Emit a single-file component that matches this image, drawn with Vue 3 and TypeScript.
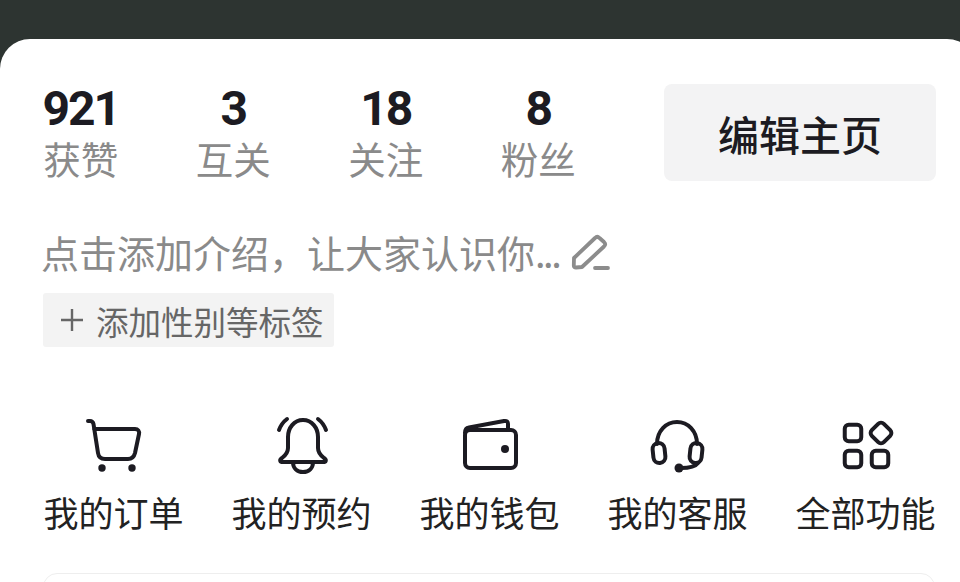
<script setup lang="ts">
const stats = [
  { value: "921", label: "获赞" },
  { value: "3", label: "互关" },
  { value: "18", label: "关注" },
  { value: "8", label: "粉丝" },
];
</script>

<template>
  <div class="page">
    <div class="sheet">
      <div class="top-row">
        <div class="stats">
          <div v-for="s in stats" :key="s.label" class="stat">
            <div class="stat-value">{{ s.value }}</div>
            <div class="stat-label">{{ s.label }}</div>
          </div>
        </div>
        <button class="edit-btn">编辑主页</button>
      </div>

      <div class="intro">
        <span>点击添加介绍，让大家认识你<span class="dots">...</span></span>
        <svg class="pencil" viewBox="0 0 40 40" fill="none" stroke="#8c8c8c" stroke-width="3.8" stroke-linecap="round" stroke-linejoin="round">
          <path d="M4 26 25 6c1.500-1.500 3-1.500 4.500 0l4.500 4c1.500 1.500 1.500 3 0 4.500L12 35l-6 .5c-1.500 0-2.200-.7-2.200-2z" />
          <path d="M25 36h13" />
        </svg>
      </div>

      <div class="tag">
        <svg class="plus" viewBox="0 0 24 24" fill="none" stroke="#666" stroke-width="2.400">
          <path d="M12 1v22M1 12h22" />
        </svg>
        <span>添加性别等标签</span>
      </div>

      <div class="actions">
        <div class="action">
          <svg viewBox="0 0 60 60" fill="none" stroke="#1c1b22" stroke-width="4" stroke-linecap="round" stroke-linejoin="round">
            <path d="M4 5h2c2 0 3 1 3.500 3L14 37c.6 4 3 6 7 6h23c4 0 6-2 7-6l4-19c.6-3-1-5-4-5H10" />
            <circle cx="18" cy="52" r="3.700" fill="#1c1b22" stroke="none" />
            <circle cx="48" cy="52" r="3.700" fill="#1c1b22" stroke="none" />
          </svg>
          <span>我的订单</span>
        </div>
        <div class="action">
          <svg viewBox="0 0 60 60" fill="none" stroke="#1c1b22" stroke-width="4" stroke-linecap="round" stroke-linejoin="round">
            <path d="M31 4c-9 0-15 8-15 17v11c0 4-2 7-6 10-3 2-2 4 1 4h40c3 0 4-2 1-4-4-3-6-6-6-10V21c0-9-6-17-15-17z" />
            <path d="M21 46c0 6 4 10 10 10s10-4 10-10" />
            <path d="M7 14c1.500-4 4-8 8-11M54 14c-1.500-4-4-8-8-11" />
          </svg>
          <span>我的预约</span>
        </div>
        <div class="action">
          <svg viewBox="0 0 60 60" fill="none" stroke="#1c1b22" stroke-width="4" stroke-linecap="round" stroke-linejoin="round">
            <rect x="5" y="14" width="51" height="38" rx="5" />
            <path d="M5 17c0-3 1-5 4-5.500L44 5c3-.5 4 1 4 3v6" />
            <circle cx="45" cy="33" r="4" fill="#1c1b22" stroke="none" />
          </svg>
          <span>我的钱包</span>
        </div>
        <div class="action">
          <svg viewBox="0 0 60 60" fill="none" stroke="#1c1b22" stroke-width="4" stroke-linecap="round" stroke-linejoin="round">
            <path d="M9 28C9 15 18 6 29 6s20 9 20 22" />
            <rect x="5" y="27" width="12" height="20" rx="6" transform="rotate(-6 11 37)" />
            <rect x="42" y="27" width="12" height="20" rx="6" transform="rotate(6 48 37)" />
            <path d="M33 52c8 0 14-1 17-5" />
            <circle cx="31" cy="52" r="4.500" fill="#1c1b22" stroke="none" />
          </svg>
          <span>我的客服</span>
        </div>
        <div class="action">
          <svg viewBox="0 0 60 60" fill="none" stroke="#1c1b22" stroke-width="4" stroke-linejoin="round">
            <rect x="8.750" y="8.750" width="16.500" height="16.500" rx="4" />
            <rect x="8.750" y="34.750" width="16.500" height="16.500" rx="4" />
            <rect x="35.750" y="34.750" width="16.500" height="16.500" rx="4" />
            <rect x="36.500" y="8.500" width="17" height="17" rx="4" transform="rotate(45 45 17)" />
          </svg>
          <span>全部功能</span>
        </div>
      </div>

      <div class="panel"></div>
    </div>
  </div>
</template>

<style scoped>
.page {
  height: 582px;
  overflow: hidden;
  padding-top: 39px;
  box-sizing: border-box;
  background: #2d3431;
  font-family: "Noto Sans CJK SC", "Noto Sans", sans-serif;
}

/* the sheet runs a little past the right edge, so that corner looks cut off */
.sheet {
  height: 100%;
  margin-right: -17px;
  background: #fff;
  border-radius: 30px 30px 0 0;
  overflow: hidden;
  padding-top: 45px;
  box-sizing: border-box;
}

.top-row {
  display: flex;
  align-items: flex-start;
  padding-left: 4.500px;
}

.stats {
  display: grid;
  grid-template-columns: repeat(4, 152.500px);
}

.stat {
  display: flex;
  flex-direction: column;
  align-items: center;
}

.stat-value {
  font-family: Roboto, "Noto Sans", sans-serif;
  font-size: 48px;
  font-weight: 700;
  line-height: 49px;
  letter-spacing: -2px;
  color: #1c1b22;
}

.stat-label {
  font-size: 37.500px;
  line-height: 50px;
  color: #8a8a8a;
}

.edit-btn {
  width: 272px;
  height: 97px;
  margin-left: 49.500px;
  border: none;
  border-radius: 8px;
  background: #f3f3f4;
  color: #1c1b22;
  font-family: inherit;
  font-size: 41px;
  font-weight: 500;
}

.intro {
  display: flex;
  align-items: center;
  gap: 11px;
  margin: 43px 0 0 41px;
  font-size: 38px;
  line-height: 52px;
  color: #8a8a8a;
}

.dots {
  letter-spacing: -2.500px;
}

.pencil {
  width: 40px;
  height: 40px;
}

.tag {
  display: inline-flex;
  align-items: center;
  gap: 12px;
  height: 54px;
  margin: 15px 0 0 43px;
  padding: 0 10px 0 17px;
  border-radius: 3px;
  background: #f3f3f3;
  font-size: 32.500px;
  color: #666;
}

.plus {
  width: 24px;
  height: 24px;
}

.actions {
  display: grid;
  grid-template-columns: repeat(5, 188px);
  padding: 69px 0 0 19.500px;
}

.action {
  display: flex;
  flex-direction: column;
  align-items: center;
  font-size: 35px;
  line-height: 50px;
  color: #222;
}

.action svg {
  width: 60px;
  height: 60px;
  margin-bottom: 11px;
}

.panel {
  height: 60px;
  margin: 36px 42px 0 43px;
  border: 1px solid #eee;
  border-radius: 14px;
}
</style>

<style>
body {
  background: #2d3431;
}
</style>
